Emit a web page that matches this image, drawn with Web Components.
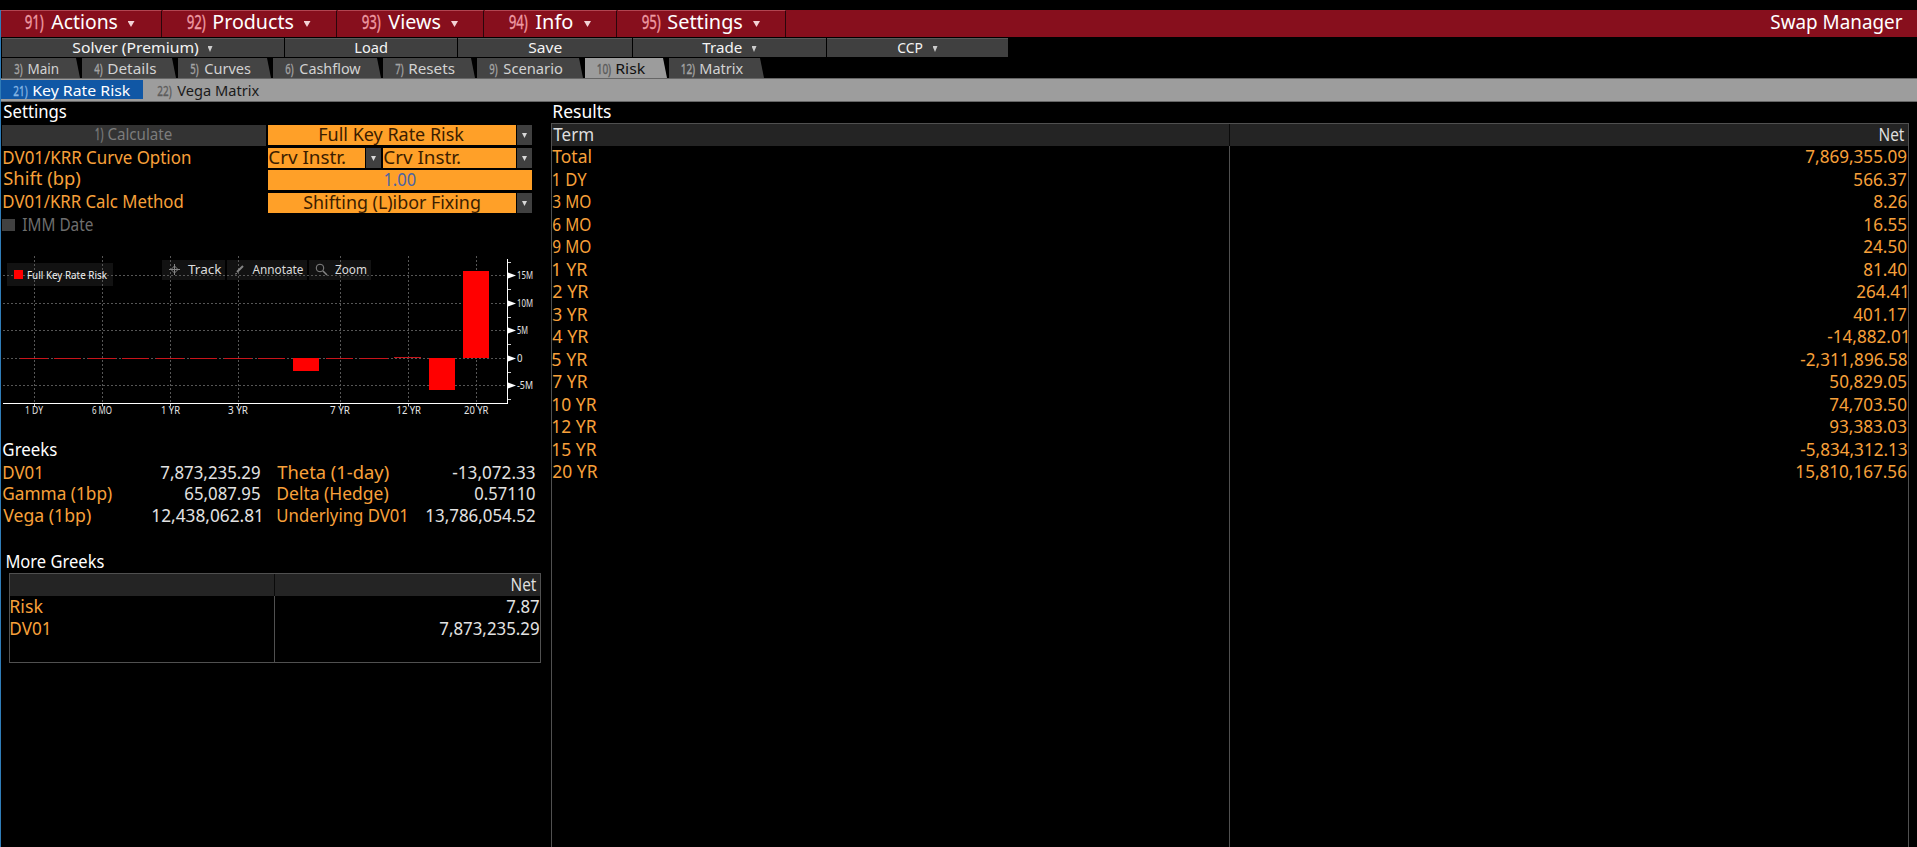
<!DOCTYPE html>
<html lang="en">
<head>
<meta charset="utf-8">
<title>Swap Manager</title>
<style>
html,body{margin:0;background:#000;height:847px;overflow:hidden}
body{font-family:"Noto Sans","Open Sans",sans-serif;font-size:18px;color:#fff}
</style>
</head>
<body>
<swap-manager></swap-manager>
<script>
const ctx = document.createElement('canvas').getContext('2d');
const define = (name, css, html = '<slot></slot>', setup) => customElements.define(name, class extends HTMLElement {
  connectedCallback() {
    if (this.shadowRoot) return;
    const root = this.attachShadow({mode: 'open'});
    root.innerHTML = `<style>:host{box-sizing:border-box}${css}</style>${typeof html === 'function' ? html(this) : html}`;
    if (setup) setup(this, root);
  }
});

/* Condensed label: w = ink width, s = horizontal scale, x = leading gap, f = font size.
   The baseline comes from the row's --b. */
define('fit-text', `
:host{display:block;height:0;flex:none;white-space:pre}
:host([num]){-webkit-text-stroke:.35px currentColor}
span{display:block;width:max-content;line-height:20px;transform-origin:0 0;margin-top:round(calc(var(--b)*1px - 10px - .388em),1px)}
`, el => `<span>${el.getAttribute('t')}</span>`, (el, root) => {
  const size = el.getAttribute('f') || parseFloat(getComputedStyle(el).fontSize);
  el.style.fontSize = size + 'px';
  ctx.font = `${size}px "Noto Sans"`;
  const m = ctx.measureText(el.getAttribute('t'));
  const ink = m.actualBoundingBoxRight + m.actualBoundingBoxLeft;
  const s = el.hasAttribute('w') ? el.getAttribute('w') / ink : +(el.getAttribute('s') || .945);
  el.style.width = ink * s + 'px';
  el.style.marginLeft = (el.getAttribute('x') || 0) + 'px';
  if (el.hasAttribute('c')) el.style.color = el.getAttribute('c');
  root.querySelector('span').style.transform = `translateX(${m.actualBoundingBoxLeft * s - .7}px) scaleX(${s})`;
});

define('drop-arrow', `
:host{display:block;flex:none;width:var(--aw,7px);height:var(--ah,6px);background:currentColor;clip-path:polygon(0 0,100% 0,50% 100%);margin-top:var(--at,11px)}
`, '', el => { el.style.marginLeft = (el.getAttribute('x') || 0) + 'px'; });

define('flow-row', `:host{display:flex;align-items:flex-start}`, '<slot></slot>', el => {
  if (el.hasAttribute('h')) el.style.height = el.getAttribute('h') + 'px';
  if (el.hasAttribute('b')) el.style.setProperty('--b', el.getAttribute('b'));
  if (el.hasAttribute('mt')) el.style.marginTop = el.getAttribute('mt') + 'px';
});
const sized = el => { el.style.width = el.getAttribute('w') + 'px'; };

define('menu-item', `:host{display:flex;align-items:flex-start;flex:none;height:27px;background:#870f1d;border-top:1px solid #b24551;border-right:1px solid #2a060b;margin-right:1px;--b:19;--at:10px;color:#fff}
drop-arrow{color:#f3d3d6}`,
  el => `<fit-text num f="20" c="#ee9aa3" x="${el.getAttribute('a')}" w="${el.getAttribute('nw') || 18.5}" t="${el.getAttribute('n')})"></fit-text>
  <fit-text f="20" x="7.5" w="${el.getAttribute('lw')}" t="${el.getAttribute('t')}"></fit-text><drop-arrow x="10"></drop-arrow>`, sized);

define('tool-button', `:host{display:flex;align-items:flex-start;flex:none;height:19px;background:#404040;border-top:1px solid #595959;margin-right:1px;--b:14;--at:7px;--aw:5px;--ah:6px;color:#f4f4f4}
drop-arrow{color:#ccc}`,
  el => `<fit-text f="15" x="${el.getAttribute('a')}" w="${el.getAttribute('lw')}" t="${el.getAttribute('t')}"></fit-text>${el.hasAttribute('drop') ? '<drop-arrow x="9"></drop-arrow>' : ''}`, sized);

define('page-tab', `:host{display:flex;align-items:flex-start;flex:none;height:20px;background:#444;margin-right:2px;--b:16;color:#d2d2d2;--n:#a4a4a4;clip-path:polygon(0 0,calc(100% - 4px) 0,100% 100%,0 100%)}
:host([active]){background:#9c9c9c;color:#111;--n:#5a5a5a}
:host([sub]){height:19px;background:none;color:#1a1a1a;--n:#5c5c5c;clip-path:none;margin:0}
:host([sub][active]){background:#1057a5;color:#fff;--n:#86b5e4}
fit-text:first-of-type{color:var(--n)}`,
  el => `<fit-text num f="15" x="12.5" w="${el.getAttribute('nw') || 8}" t="${el.getAttribute('n')})"></fit-text>
  <fit-text f="15" x="6" w="${el.getAttribute('lw')}" t="${el.getAttribute('t')}"></fit-text>`, sized);

/* Orange input field, with an optional drop-down button */
define('amber-field', `:host{display:flex;flex:none;height:20px;--b:16}
div{flex:1;display:flex;align-items:flex-start;background:#ffa028;color:#3b1d00}
i{display:flex;flex:none;justify-content:center;width:15px;background:#404040;margin-left:1px;color:#d8d8d8;--at:8px;--aw:5px;--ah:5px}`,
  el => `<div><slot></slot></div>${el.hasAttribute('drop') ? '<i><drop-arrow></drop-arrow></i>' : ''}`, sized);

define('action-button', `:host{display:flex;align-items:flex-start;flex:none;width:264px;height:21px;margin-left:2px;margin-right:2px;background:#333;color:#7c7c7c}`);
define('check-box', `:host{display:block;flex:none;width:13px;height:12px;background:#414141;margin:4px 0 0 2px}`, '');
define('label-cell', `:host{display:flex;align-items:flex-start;flex:none}`, '<slot></slot>', sized);
define('num-cell', `:host{display:flex;align-items:flex-start;justify-content:flex-end;flex:none}`, '<slot></slot>', sized);

define('risk-chart', `:host{display:block;height:170px}svg{display:block}text{font-size:10px;fill:#e4e4e4}`, () => {
  const xs = [...Array(14)].map((_, i) => 34.5 + i * 34);
  const grid = [25.5, 53.5, 80.5, 108.5, 135.5].map(y => `<path d="M3 ${y}H507"/>`).join('') +
    [0, 2, 4, 6, 9, 11, 13].map(i => `<path d="M${xs[i]} 6V153"/>`).join('');
  const bars = xs.map((x, i) => {
    const [y, h, c] = {8: [108, 13, '#f00'], 11: [107, 1, '#c8141a'], 12: [108, 32, '#f00'], 13: [21, 87, '#f00']}[i] || [108, 1, '#c8141a'];
    const w = h < 2 ? 28 : 26;
    return `<rect x="${Math.floor(x) - w / 2}" y="${y}" width="${w - (h < 2 && i % 2 ? 1 : 0)}" height="${h}" fill="${c}"/>`;
  }).join('');
  const xl = [['1 DY', 25, 18], ['6 MO', 92, 20], ['1 YR', 161, 19], ['3 YR', 228, 20], ['7 YR', 330, 20], ['12 YR', 396.5, 24.5], ['20 YR', 464, 24.5]]
    .map(([t, x, w]) => `<text x="${x}" y="164" textLength="${w}" lengthAdjust="spacingAndGlyphs">${t}</text>`).join('');
  const yl = [['15M', 25.5, 16], ['10M', 53.5, 16], ['5M', 80.5, 11], ['0', 108.5, 5.5], ['-5M', 135.5, 16]]
    .map(([t, y, w]) => `<path d="M508 ${y - 3}L516 ${y}L508 ${y + 3}Z" fill="#fff"/><text x="517" y="${y + 3.5}" textLength="${w}" lengthAdjust="spacingAndGlyphs">${t}</text>`).join('');
  const t = (s, x, y, w, f, c) => `<text x="${x}" y="${y}" textLength="${w}" lengthAdjust="spacingAndGlyphs" style="font-size:${f}px;fill:${c}">${s}</text>`;
  return `<svg width="550" height="170">
  <g fill="#121212"><rect x="7" y="13" width="106" height="23"/><rect x="162" y="10" width="63" height="20"/><rect x="227" y="10" width="80" height="20"/><rect x="309" y="10" width="62" height="20"/></g>
  <g stroke="#565656" stroke-dasharray="2 2" fill="none">${grid}</g>${bars}
  <path d="M3 153.5H508M507.5 9V154" stroke="#fff" fill="none"/>
  <path d="M508 12.5h3M508 39.5h3M508 67.5h3M508 94.5h3M508 122.5h3M508 149.5h3${[0, 2, 4, 6, 9, 11, 13].map(i => `M${xs[i]} 154v2.5`).join('')}" stroke="#ccc"/>
  ${xl}${yl}
  <rect x="14" y="20" width="9" height="9" fill="#f00"/>${t('Full Key Rate Risk', 27, 29, 80, 10, '#f2f2f2')}
  <g stroke="#858585" fill="none"><path d="M174.5 14v11M169 19.5h11"/><path d="M174.5 16L178 19.5L174.5 23L171 19.5Z"/>
  <path d="M237 22L243 16" stroke-width="2"/><path d="M235 24l2-.5"/><circle cx="320" cy="18" r="3.8"/><path d="M323 21L327 25" stroke-width="1.6"/></g>
  ${t('Track', 188, 24, 33.5, 12.5, '#dcdcdc')}${t('Annotate', 252.5, 24, 51, 12.5, '#dcdcdc')}${t('Zoom', 335, 24, 32, 12.5, '#dcdcdc')}
  </svg>`;
});

/* Two-column grid table: header strip, divider line, slotted rows */
define('data-table', `:host{display:flex;flex-direction:column;border:1px solid #505050;
 background:linear-gradient(#505050,#505050) var(--mid) 0/1px 100% no-repeat}
header{display:flex;flex:none;height:var(--hh,22px);background:linear-gradient(90deg,#242424 var(--mid),#0a0a0a var(--mid),#0a0a0a calc(var(--mid) + 1px),#242424 0);color:#dedede;--b:16.5;align-items:flex-start}
header slot{display:flex;width:100%;justify-content:space-between}`,
 '<header><slot name="head"></slot></header><slot></slot>');

const RESULTS = [['Total','7,869,355.09',39],['1 DY','566.37',35],['3 MO','8.26',38],['6 MO','16.55',38],['9 MO','24.50',38],['1 YR','81.40',35],['2 YR','264.41',36],['3 YR','401.17',35],['4 YR','-14,882.01',36],['5 YR','-2,311,896.58',35],['7 YR','50,829.05',35],['10 YR','74,703.50',44],['12 YR','93,383.03',44],['15 YR','-5,834,312.13',44],['20 YR','15,810,167.56',45]];
const resultRows = RESULTS.map(([l, v, w], i) => {
  const top = Math.round(i * 22.52), next = Math.round((i + 1) * 22.52);
  return `<flow-row class="between amber" style="padding-right:.5px" h="${next - top}" b="17"><fit-text x="1.3" w="${w}" t="${l}"></fit-text><fit-text s=".95" t="${v}"></fit-text></flow-row>`;
}).join('');
const greek = (h, a, aw, v, vw, b, bw, u, uw) => `<flow-row h="${h}" b="18"><label-cell class="amber" w="120"><fit-text x="4" w="${aw}" t="${a}"></fit-text></label-cell><num-cell class="val" w="141"><fit-text w="${vw}" t="${v}"></fit-text></num-cell><label-cell class="amber" w="150"><fit-text x="17" w="${bw}" t="${b}"></fit-text></label-cell><num-cell class="val" w="124.5"><fit-text w="${uw}" t="${u}"></fit-text></num-cell></flow-row>`;

define('swap-manager', `
:host{display:flex;flex-direction:column;width:1917px;height:847px;background:#000;overflow:hidden}
.frame{flex:1;margin-top:10px;border-left:1px solid #2f7cb8;display:flex;flex-direction:column;min-height:0}
.menu{background:#870f1d;height:27px;justify-content:flex-start;box-shadow:inset 2px 0 0 -1px #111}
.push{margin-left:auto;padding-right:14.5px}
.sub{background:#9d9d9d;border-top:1px solid #666;border-bottom:1px solid #666;padding-top:1px}
.panes{display:grid;grid-template-columns:550px 1fr;flex:1;margin-left:-1px;min-height:0}
.right{display:flex;flex-direction:column;min-height:0}
.between{justify-content:space-between}
.amber{color:#f8a03a}.val{color:#e2e2e2}
.results{flex:1;margin:0 8px 0 1px;width:1358px;--mid:677px;--hh:22px;border-bottom:0}
.more{width:532px;height:90px;margin-left:9px;--mid:264px}
.dim{color:#6e6e6e}`,
`<div class="frame">
 <flow-row class="menu">
  <menu-item w="161" n="91" a="24.5" lw="66" t="Actions"></menu-item>
  <menu-item w="174" n="92" a="24.5" lw="80" t="Products"></menu-item>
  <menu-item w="146" n="93" a="25" lw="52" t="Views"></menu-item>
  <menu-item w="132" n="94" a="25" lw="38" t="Info"></menu-item>
  <menu-item w="168" n="95" a="25" lw="74" t="Settings"></menu-item>
  <flow-row class="push" b="20"><fit-text f="20" w="131" t="Swap Manager"></fit-text></flow-row>
 </flow-row>
 <flow-row mt="1" style="margin-left:1px">
  <tool-button w="282" a="70.5" lw="126" drop t="Solver (Premium)"></tool-button>
  <tool-button w="172" a="70.5" lw="31.5" t="Load"></tool-button>
  <tool-button w="174" a="70.5" lw="33.5" t="Save"></tool-button>
  <tool-button w="193" a="70" lw="39.5" drop t="Trade"></tool-button>
  <tool-button w="181" a="71" lw="25.5" drop t="CCP"></tool-button>
 </flow-row>
 <flow-row mt="1" style="margin-left:1px">
  <page-tab w="78" n="3" lw="30.5" t="Main"></page-tab>
  <page-tab w="94" n="4" lw="48" t="Details"></page-tab>
  <page-tab w="93" n="5" lw="46.5" t="Curves"></page-tab>
  <page-tab w="108" n="6" lw="61.5" t="Cashflow"></page-tab>
  <page-tab w="92" n="7" lw="45.5" t="Resets"></page-tab>
  <page-tab w="106" n="9" lw="59.5" t="Scenario"></page-tab>
  <page-tab w="82" n="10" nw="13.5" lw="29" t="Risk" active></page-tab>
  <page-tab w="95" n="12" nw="13.5" lw="43" t="Matrix"></page-tab>
 </flow-row>
 <flow-row class="sub" h="24">
  <page-tab sub active w="142" n="21" nw="14" lw="97" t="Key Rate Risk"></page-tab>
  <page-tab sub w="142" n="22" nw="14" lw="82" t="Vega Matrix" style="padding-left:2px"></page-tab>
 </flow-row>
 <div class="panes">
  <section>
   <flow-row h="23" b="16"><fit-text x="4" w="63" t="Settings"></fit-text></flow-row>
   <flow-row h="23" b="16"><action-button><fit-text f="17" x="94" w="8" num t="1)"></fit-text><fit-text f="17" x="5" w="63.5" t="Calculate"></fit-text></action-button>
    <amber-field w="264" drop><fit-text x="51.5" w="145" t="Full Key Rate Risk"></fit-text></amber-field></flow-row>
   <flow-row h="22" b="16"><label-cell class="amber" w="268"><fit-text x="4" w="187" t="DV01/KRR Curve Option"></fit-text></label-cell>
    <amber-field w="113" drop><fit-text x="1.5" w="76" t="Crv Instr."></fit-text></amber-field>
    <amber-field w="149" drop style="margin-left:2px"><fit-text x="1.5" w="76" t="Crv Instr."></fit-text></amber-field></flow-row>
   <flow-row h="23" b="15"><label-cell class="amber" w="268"><fit-text x="4" w="77" t="Shift (bp)"></fit-text></label-cell>
    <amber-field w="264"><fit-text x="117" w="31.5" c="#4c64a4" t="1.00"></fit-text></amber-field></flow-row>
   <flow-row h="22" b="15"><label-cell class="amber" w="268"><fit-text x="4" w="179.5" t="DV01/KRR Calc Method"></fit-text></label-cell>
    <amber-field w="264" drop><fit-text x="36" w="176.5" t="Shifting (L)ibor Fixing"></fit-text></amber-field></flow-row>
   <flow-row class="dim" h="35" b="15.5"><check-box></check-box><fit-text x="7.5" w="71" t="IMM Date"></fit-text></flow-row>
   <risk-chart></risk-chart>
   <flow-row mt="19" h="22" b="17"><fit-text x="4" w="53.5" t="Greeks"></fit-text></flow-row>
   ${greek(21, 'DV01', 37.5, '7,873,235.29', 100, 'Theta (1-day)', 111.5, '-13,072.33', 83)}
   ${greek(22, 'Gamma (1bp)', 108.5, '65,087.95', 76, 'Delta (Hedge)', 111, '0.57110', 61)}
   ${greek(22, 'Vega (1bp)', 87.5, '12,438,062.81', 108.5, 'Underlying DV01', 128.5, '13,786,054.52', 109)}
   <flow-row mt="24" h="23" b="18"><fit-text x="6.5" w="97.5" t="More Greeks"></fit-text></flow-row>
   <data-table class="more"><flow-row slot="head" style="width:100%;justify-content:flex-end;padding-right:3px"><fit-text w="25.5" t="Net"></fit-text></flow-row>
    <flow-row class="between" h="22" b="17"><fit-text class="amber" x="1" w="33" t="Risk"></fit-text><fit-text class="val" style="padding-right:1px" w="33" t="7.87"></fit-text></flow-row>
    <flow-row class="between" h="22" b="17"><fit-text class="amber" x="1" w="38" t="DV01"></fit-text><fit-text class="val" style="padding-right:1px" w="100" t="7,873,235.29"></fit-text></flow-row>
   </data-table>
  </section>
  <section class="right">
   <flow-row h="21" b="16"><fit-text x="4" w="57.5" t="Results"></fit-text></flow-row>
   <data-table class="results"><flow-row slot="head" class="between" style="width:100%;padding:0 3px 0 2px"><fit-text w="40" t="Term"></fit-text><fit-text w="25.5" t="Net"></fit-text></flow-row>
    ${resultRows}
   </data-table>
  </section>
 </div>
</div>`);
</script>
</body>
</html>
